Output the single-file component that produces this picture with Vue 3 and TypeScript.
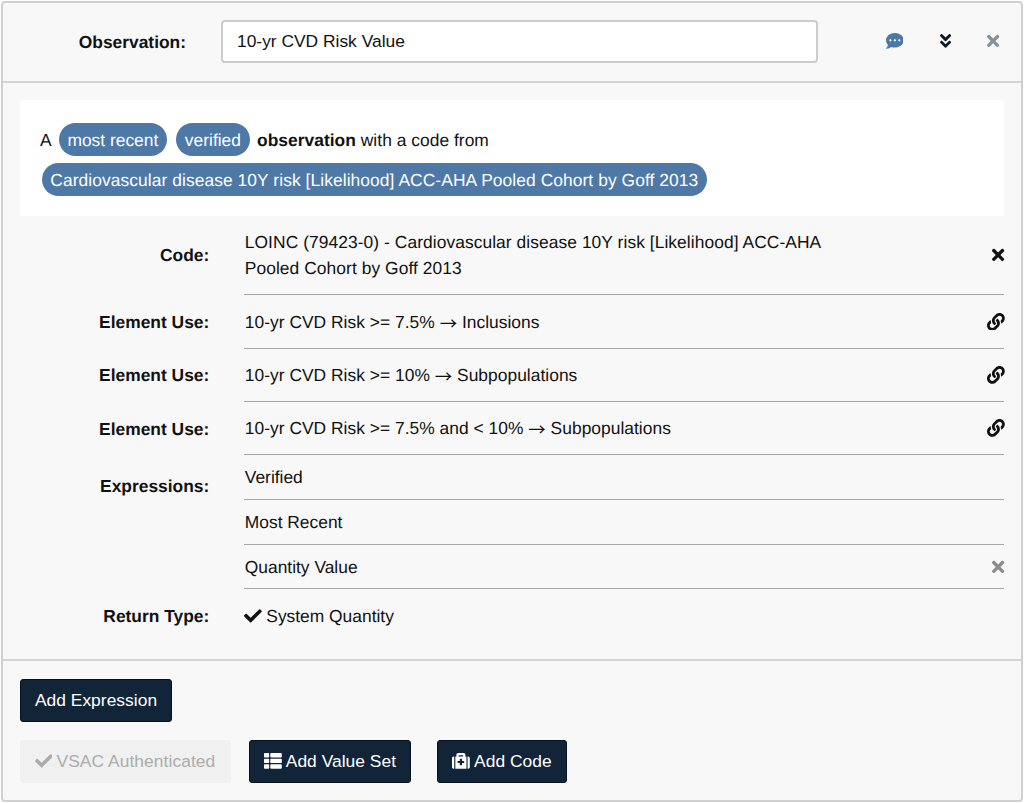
<script setup lang="ts">
import { h, type FunctionalComponent } from 'vue'

type IconName = 'comment' | 'chevrons' | 'times' | 'link' | 'check' | 'list' | 'medkit'

const glyphs: Record<IconName, { width: number; path: string }> = {
  comment: {
    width: 512,
    path: 'M256 32C114.6 32 0 125.1 0 240c0 49.6 21.4 95 57 130.7C44.5 421.1 2.7 466 2.2 466.5c-2.2 2.3-2.8 5.7-1.5 8.7S4.8 480 8 480c66.3 0 116-31.8 140.6-51.4 32.7 12.3 69 19.4 107.4 19.4 141.4 0 256-93.1 256-208S397.4 32 256 32zM128 272c-17.7 0-32-14.3-32-32s14.3-32 32-32 32 14.3 32 32-14.3 32-32 32zm128 0c-17.7 0-32-14.3-32-32s14.3-32 32-32 32 14.3 32 32-14.3 32-32 32zm128 0c-17.7 0-32-14.3-32-32s14.3-32 32-32 32 14.3 32 32-14.3 32-32 32z',
  },
  chevrons: {
    width: 320,
    path: 'M143 256.3L7 120.3c-9.4-9.4-9.4-24.6 0-33.9l22.6-22.6c9.4-9.4 24.6-9.4 33.9 0l96.4 96.4 96.4-96.4c9.4-9.4 24.6-9.4 33.9 0L313 86.3c9.4 9.4 9.4 24.6 0 33.9l-136 136c-9.4 9.5-24.6 9.5-34 .1zm34 192l136-136c9.4-9.4 9.4-24.6 0-33.9l-22.6-22.6c-9.4-9.4-24.6-9.4-33.9 0L160 352.1l-96.4-96.4c-9.4-9.4-24.6-9.4-33.9 0L7 278.3c-9.4 9.4-9.4 24.6 0 33.9l136 136c9.4 9.5 24.6 9.5 34 .1z',
  },
  times: {
    width: 352,
    path: 'M242.72 256l100.07-100.07c12.28-12.28 12.28-32.19 0-44.48l-22.24-22.24c-12.28-12.28-32.19-12.28-44.48 0L176 189.28 75.93 89.21c-12.28-12.28-32.19-12.28-44.48 0L9.21 111.45c-12.28 12.28-12.28 32.19 0 44.48L109.28 256 9.21 356.07c-12.28 12.28-12.28 32.19 0 44.48l22.24 22.24c12.28 12.28 32.2 12.28 44.48 0L176 322.72l100.07 100.07c12.28 12.28 32.2 12.28 44.48 0l22.24-22.24c12.28-12.28 12.28-32.19 0-44.48L242.72 256z',
  },
  link: {
    width: 512,
    path: 'M326.612 185.391c59.747 59.809 58.927 155.698.36 214.59-.11.12-.24.25-.36.37l-67.2 67.2c-59.27 59.27-155.699 59.262-214.96 0-59.27-59.26-59.27-155.7 0-214.96l37.106-37.106c9.84-9.84 26.786-3.3 27.294 10.606.648 17.722 3.826 35.527 9.69 52.721 1.986 5.822.567 12.262-3.783 16.612l-13.087 13.087c-28.026 28.026-28.905 73.66-1.155 101.96 28.024 28.579 74.086 28.749 102.325.51l67.2-67.19c28.191-28.191 28.073-73.757 0-101.83-3.701-3.694-7.429-6.564-10.341-8.569a16.037 16.037 0 0 1-6.947-12.606c-.396-10.567 3.348-21.456 11.698-29.806l21.054-21.055c5.521-5.521 14.182-6.199 20.584-1.731a152.482 152.482 0 0 1 20.522 17.197zM467.547 44.449c-59.261-59.262-155.69-59.27-214.96 0l-67.2 67.2c-.12.12-.25.25-.36.37-58.566 58.892-59.387 154.781.36 214.59a152.454 152.454 0 0 0 20.521 17.196c6.402 4.468 15.064 3.789 20.584-1.731l21.054-21.055c8.35-8.35 12.094-19.239 11.698-29.806a16.037 16.037 0 0 0-6.947-12.606c-2.912-2.005-6.64-4.875-10.341-8.569-28.073-28.073-28.191-73.639 0-101.83l67.2-67.19c28.239-28.239 74.3-28.069 102.325.51 27.75 28.3 26.872 73.934-1.155 101.96l-13.087 13.087c-4.35 4.35-5.769 10.79-3.783 16.612 5.864 17.194 9.042 34.999 9.69 52.721.509 13.906 17.454 20.446 27.294 10.606l37.106-37.106c59.271-59.259 59.271-155.699.001-214.959z',
  },
  check: {
    width: 512,
    path: 'M173.898 439.404l-166.4-166.4c-9.997-9.997-9.997-26.206 0-36.204l36.203-36.204c9.997-9.998 26.207-9.998 36.204 0L192 312.69 432.095 72.596c9.997-9.997 26.207-9.997 36.204 0l36.203 36.204c9.997 9.997 9.997 26.206 0 36.204l-294.4 294.401c-9.998 9.997-26.207 9.997-36.204-.001z',
  },
  list: {
    width: 512,
    path: 'M24 32h101a24 24 0 0 1 24 24v80a24 24 0 0 1-24 24H24a24 24 0 0 1-24-24V56a24 24 0 0 1 24-24zM205 32h283a24 24 0 0 1 24 24v80a24 24 0 0 1-24 24H205a24 24 0 0 1-24-24V56a24 24 0 0 1 24-24zM24 192h101a24 24 0 0 1 24 24v80a24 24 0 0 1-24 24H24a24 24 0 0 1-24-24v-80a24 24 0 0 1 24-24zM205 192h283a24 24 0 0 1 24 24v80a24 24 0 0 1-24 24H205a24 24 0 0 1-24-24v-80a24 24 0 0 1 24-24zM24 352h101a24 24 0 0 1 24 24v80a24 24 0 0 1-24 24H24a24 24 0 0 1-24-24v-80a24 24 0 0 1 24-24zM205 352h283a24 24 0 0 1 24 24v80a24 24 0 0 1-24 24H205a24 24 0 0 1-24-24v-80a24 24 0 0 1 24-24z',
  },
  medkit: {
    width: 512,
    path: 'M96 480h320V128h-32V80c0-26.51-21.49-48-48-48H176c-26.51 0-48 21.49-48 48v48H96v352zm96-384h128v32H192V96zm320 80v256c0 26.51-21.49 48-48 48h-16V128h16c26.51 0 48 21.49 48 48zM64 480H48c-26.51 0-48-21.49-48-48V176c0-26.51 21.49-48 48-48h16v352zm288-208v32c0 8.837-7.163 16-16 16h-48v48c0 8.837-7.163 16-16 16h-32c-8.837 0-16-7.163-16-16v-48h-48c-8.837 0-16-7.163-16-16v-32c0-8.837 7.163-16 16-16h48v-48c0-8.837 7.163-16 16-16h32c8.837 0 16 7.163 16 16v48h48c8.837 0 16 7.163 16 16z',
  },
}

const Icon: FunctionalComponent<{ name: IconName }> = (props) => {
  const glyph = glyphs[props.name]
  return h(
    'svg',
    {
      viewBox: `0 0 ${glyph.width} 512`,
      width: (glyph.width / 512) * 17.8,
      height: 17.8,
      fill: 'currentColor',
      'aria-hidden': 'true',
    },
    [h('path', { d: glyph.path })],
  )
}
Icon.props = ['name']

const uses = [
  { source: '10-yr CVD Risk >= 7.5%', target: 'Inclusions' },
  { source: '10-yr CVD Risk >= 10%', target: 'Subpopulations' },
  { source: '10-yr CVD Risk >= 7.5% and < 10%', target: 'Subpopulations' },
]

const expressions = [
  { name: 'Verified', removable: false },
  { name: 'Most Recent', removable: false },
  { name: 'Quantity Value', removable: true },
]
</script>

<template>
  <section class="card">
    <header class="head">
      <label class="head-label" for="element-name">Observation:</label>
      <input id="element-name" class="name" type="text" value="10-yr CVD Risk Value" />
      <div class="tools">
        <Icon name="comment" class="blue" />
        <Icon name="chevrons" class="navy" />
        <Icon name="times" class="slate" />
      </div>
    </header>

    <div class="body">
      <div class="phrase">
        <div class="phrase-line">
          <span class="word-a">A</span>
          <span class="pill">most recent</span>
          <span class="pill second">verified</span>
          <span class="rest"><b>observation</b> with a code from</span>
        </div>
        <div class="phrase-line">
          <span class="pill wide">Cardiovascular disease 10Y risk [Likelihood] ACC-AHA Pooled Cohort by Goff 2013</span>
        </div>
      </div>

      <div class="row code">
        <div class="label">Code:</div>
        <div class="value">
          <span class="code-text">LOINC (79423-0) - Cardiovascular disease 10Y risk [Likelihood] ACC-AHA Pooled Cohort by Goff 2013</span>
          <Icon name="times" />
        </div>
      </div>

      <div v-for="(use, i) in uses" :key="i" class="row use">
        <div class="label">Element Use:</div>
        <div class="value">
          <span>{{ use.source }} <span class="arrow">→</span> {{ use.target }}</span>
          <Icon name="link" />
        </div>
      </div>

      <div class="row">
        <div class="label expressions">Expressions:</div>
        <div class="stack">
          <div v-for="item in expressions" :key="item.name" class="value expression">
            <span>{{ item.name }}</span>
            <Icon v-if="item.removable" name="times" class="gray" />
          </div>
        </div>
      </div>

      <div class="row return">
        <div class="label">Return Type:</div>
        <div class="value plain"><Icon name="check" /><span>System Quantity</span></div>
      </div>
    </div>

    <footer class="foot">
      <button class="btn" type="button">Add Expression</button>
      <div class="actions">
        <button class="btn disabled" type="button" disabled><Icon name="check" />VSAC Authenticated</button>
        <button class="btn set" type="button"><Icon name="list" />Add Value Set</button>
        <button class="btn add-code" type="button"><Icon name="medkit" />Add Code</button>
      </div>
    </footer>
  </section>
</template>

<style>
body {
  background: #fff;
}
</style>

<style scoped>
.card {
  box-sizing: border-box;
  width: 1022px;
  height: 801px;
  margin: 1px;
  border: 2px solid #d0d0d0;
  border-radius: 4px;
  background: #f8f8f8;
  color: #111;
  font: 17.4px/26px "Liberation Sans", Arial, sans-serif;
  text-rendering: geometricPrecision;
  display: flex;
  flex-direction: column;
}
svg {
  display: block;
  flex: none;
}
.head {
  box-sizing: border-box;
  height: 80px;
  padding-bottom: 1px;
  border-bottom: 2px solid #d4d4d4;
  display: flex;
  align-items: center;
}
.head-label {
  width: 183px;
  text-align: right;
  font-weight: 700;
  margin-right: 35px;
}
.name {
  box-sizing: border-box;
  width: 597px;
  height: 43px;
  padding: 0 14px;
  border: 2px solid #ccc;
  border-radius: 4px;
  background: #fff;
  color: #111;
  font: inherit;
}
.tools {
  margin-left: auto;
  margin-right: 21.5px;
  padding-bottom: 1px;
  display: flex;
  align-items: center;
  gap: 36.4px;
}
.blue { color: #4c78a8; }
.navy { color: #0b1524; }
.slate { color: #85929b; }
.gray { color: #8b8b8b; }
.body {
  box-sizing: border-box;
  height: 578px;
  padding: 17px 17px 0;
  border-bottom: 2px solid #d4d4d4;
}
.phrase {
  box-sizing: border-box;
  height: 115.6px;
  padding: 23px 20px 0;
  background: #fff;
  display: flex;
  flex-direction: column;
  gap: 7.4px;
}
.phrase-line {
  display: flex;
  align-items: center;
  white-space: nowrap;
}
.word-a { margin-right: 7px; }
.pill {
  height: 33px;
  padding: 0 8.8px;
  border-radius: 17px;
  background: #4e79a7;
  color: #fff;
  line-height: 34px;
}
.second { margin: 0 7.3px 0 9px; }
.rest { letter-spacing: 0.03px; }
.wide {
  margin-left: 1.5px;
  letter-spacing: 0.074px;
}
.row {
  display: flex;
}
.label {
  width: 189.3px;
  margin-right: 34.7px;
  text-align: right;
  font-weight: 700;
  align-self: center;
}
.value {
  box-sizing: border-box;
  flex: 1;
  padding-left: 0.8px;
  border-bottom: 1px solid #a8a8a8;
  display: flex;
  align-items: center;
  justify-content: space-between;
}
.value > svg {
  margin-right: -0.5px;
}
.code .value { height: 79.8px; }
.code-text {
  width: 600px;
  letter-spacing: 0.065px;
}
.use .value {
  height: 53.33px;
  letter-spacing: 0.025px;
}
.arrow {
  font-family: "Noto Sans CJK JP", sans-serif;
  line-height: 0;
  vertical-align: -2px;
}
.stack {
  flex: 1;
}
.expression {
  height: 44.67px;
}
.expressions {
  align-self: flex-start;
  margin-top: 18px;
}
.return .value {
  height: 54px;
  padding-left: 0;
  border: 0;
  justify-content: flex-start;
  gap: 5px;
}
.foot {
  padding: 18px 17px 0;
}
.actions {
  margin-top: 18px;
  display: flex;
}
.btn {
  box-sizing: border-box;
  height: 43px;
  width: 152px;
  padding: 0 0 1px;
  border: 1px solid #07131f;
  border-radius: 3px;
  background: #122438;
  color: #fff;
  font: inherit;
  letter-spacing: 0.03px;
  display: flex;
  align-items: center;
  justify-content: center;
  gap: 4px;
}
.disabled {
  width: 211px;
  background: #f0f0f0;
  border-color: #f0f0f0;
  color: #acacac;
  letter-spacing: 0.07px;
}
.disabled svg {
  margin-left: -1px;
}
.set {
  width: 162px;
  margin-left: 18px;
}
.add-code {
  width: 130px;
  margin-left: 26px;
}
</style>
